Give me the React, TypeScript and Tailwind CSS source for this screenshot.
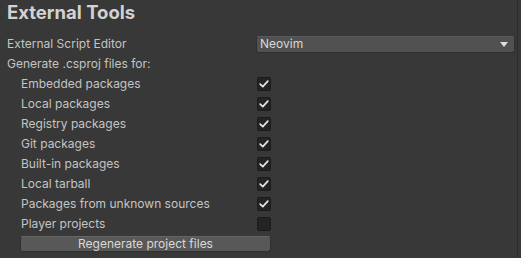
import React from "react";

const items: { label: string; checked: boolean }[] = [
  { label: "Embedded packages", checked: true },
  { label: "Local packages", checked: true },
  { label: "Registry packages", checked: true },
  { label: "Git packages", checked: true },
  { label: "Built-in packages", checked: true },
  { label: "Local tarball", checked: true },
  { label: "Packages from unknown sources", checked: true },
  { label: "Player projects", checked: false },
];

function Check({ checked }: { checked: boolean }) {
  return (
    <div className="w-[14px] h-[14px] rounded-[2px] bg-[#242424] border border-[#1b1b1b] flex items-center justify-center">
      {checked && (
        <svg width="10" height="8" viewBox="0 0 10 8" fill="none">
          <path d="M1.2 4.2 L3.8 6.6 L8.8 1.2" stroke="#e6e6e6" strokeWidth="1.7" strokeLinecap="round" strokeLinejoin="round" />
        </svg>
      )}
    </div>
  );
}

export default function App() {
  return (
    <div
      className="w-[521px] h-[258px] bg-[#383838] text-[#c4c4c4] flex overflow-hidden"
      style={{ fontFamily: "Inter, 'Liberation Sans', sans-serif" }}
    >
      <div className="flex-1 flex flex-col pl-[7px]">
        <div className="h-[34px] text-[18.5px] font-bold text-[#d2d2d2] leading-[24px]">External Tools</div>
        <div className="h-[20px] flex items-center text-[12px]">
          <div className="w-[249px]">External Script Editor</div>
          <div className="w-[259px] h-[17px] bg-[#515151] border border-[#303030] border-t-[#5a5a5a] rounded-[3px] flex items-center pl-[3px] pr-[6px] text-[#d8d8d8]">
            <span className="flex-1">Neovim</span>
            <svg width="8" height="5" viewBox="0 0 8 5">
              <path d="M0 0 L8 0 L4 5 Z" fill="#e0e0e0" />
            </svg>
          </div>
        </div>
        <div className="h-[20px] flex items-center text-[12px]">Generate .csproj files for:</div>
        {items.map((it) => (
          <div key={it.label} className="h-[20px] flex items-center text-[12px] pl-[14px]">
            <div className="w-[236px]">{it.label}</div>
            <Check checked={it.checked} />
          </div>
        ))}
        <div className="pl-[13px] pt-[2px]">
          <div className="w-[251px] h-[16px] bg-[#585858] border border-[#303030] border-t-[#656565] rounded-[3px] flex items-center justify-center text-[12px] text-[#d8d8d8]">
            Regenerate project files
          </div>
        </div>
      </div>
      <div className="w-[1px] bg-[#2c2c2c] mr-[3px]" />
    </div>
  );
}
